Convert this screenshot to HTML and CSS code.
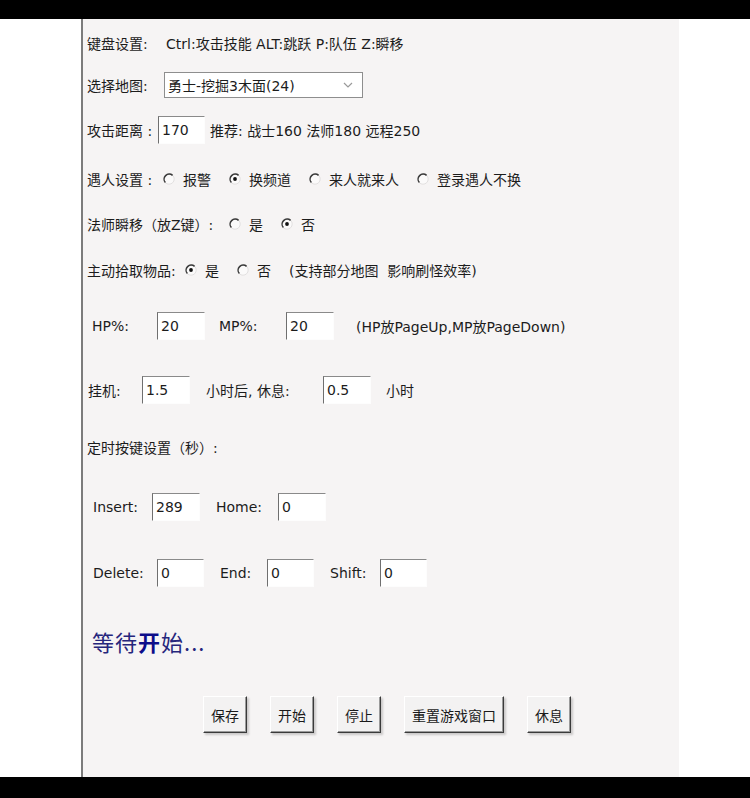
FILE: index.html
```html
<!DOCTYPE html>
<html lang="zh">
<head>
<meta charset="utf-8">
<title>设置</title>
<link rel="stylesheet" href="styles.css">
</head>
<body>
<div class="topbar"></div>
<div class="main">
  <div class="gutter"></div>
  <div class="divider"></div>
  <div class="panel">
    <div class="row row-keys">
      <span class="lbl w79">键盘设置:</span>
      <span>Ctrl:攻击技能 ALT:跳跃 P:队伍 Z:瞬移</span>
    </div>
    <div class="row row-map">
      <span class="lbl w77">选择地图:</span>
      <div class="select">
        <span>勇士-挖掘3木面(24)</span>
        <svg class="chev" viewBox="0 0 10 6" width="10" height="6"><polyline points="1,1 5,5 9,1" fill="none" stroke="#9a9a9a" stroke-width="1.2"/></svg>
      </div>
    </div>
    <div class="row row-dist">
      <span class="lbl w71">攻击距离 :</span>
      <span class="field w47">170</span>
      <span class="ml4">推荐: 战士160 法师180 远程250</span>
    </div>
    <div class="row row-meet">
      <span class="lbl w76">遇人设置 :</span>
      <span class="opt"><svg class="radio" viewBox="0 0 12 12"><circle cx="6" cy="6" r="5.2" fill="#fbfafa" stroke="#e2e0e0" stroke-width="1"/><path d="M2.4 9.6A5.1 5.1 0 0 1 9.6 2.4" fill="none" stroke="#3a3a3a" stroke-width="1.5"/></svg>报警</span>
      <span class="opt"><svg class="radio" viewBox="0 0 12 12"><circle cx="6" cy="6" r="5.2" fill="#fbfafa" stroke="#e2e0e0" stroke-width="1"/><path d="M2.4 9.6A5.1 5.1 0 0 1 9.6 2.4" fill="none" stroke="#3a3a3a" stroke-width="1.5"/><circle cx="6" cy="6" r="1.9" fill="#111"/></svg>换频道</span>
      <span class="opt"><svg class="radio" viewBox="0 0 12 12"><circle cx="6" cy="6" r="5.2" fill="#fbfafa" stroke="#e2e0e0" stroke-width="1"/><path d="M2.4 9.6A5.1 5.1 0 0 1 9.6 2.4" fill="none" stroke="#3a3a3a" stroke-width="1.5"/></svg>来人就来人</span>
      <span class="opt"><svg class="radio" viewBox="0 0 12 12"><circle cx="6" cy="6" r="5.2" fill="#fbfafa" stroke="#e2e0e0" stroke-width="1"/><path d="M2.4 9.6A5.1 5.1 0 0 1 9.6 2.4" fill="none" stroke="#3a3a3a" stroke-width="1.5"/></svg>登录遇人不换</span>
    </div>
    <div class="row row-mage">
      <span class="lbl w142">法师瞬移（放Z键）:</span>
      <span class="opt"><svg class="radio" viewBox="0 0 12 12"><circle cx="6" cy="6" r="5.2" fill="#fbfafa" stroke="#e2e0e0" stroke-width="1"/><path d="M2.4 9.6A5.1 5.1 0 0 1 9.6 2.4" fill="none" stroke="#3a3a3a" stroke-width="1.5"/></svg>是</span>
      <span class="opt"><svg class="radio" viewBox="0 0 12 12"><circle cx="6" cy="6" r="5.2" fill="#fbfafa" stroke="#e2e0e0" stroke-width="1"/><path d="M2.4 9.6A5.1 5.1 0 0 1 9.6 2.4" fill="none" stroke="#3a3a3a" stroke-width="1.5"/><circle cx="6" cy="6" r="1.9" fill="#111"/></svg>否</span>
    </div>
    <div class="row row-pick">
      <span class="lbl w98">主动拾取物品:</span>
      <span class="opt"><svg class="radio" viewBox="0 0 12 12"><circle cx="6" cy="6" r="5.2" fill="#fbfafa" stroke="#e2e0e0" stroke-width="1"/><path d="M2.4 9.6A5.1 5.1 0 0 1 9.6 2.4" fill="none" stroke="#3a3a3a" stroke-width="1.5"/><circle cx="6" cy="6" r="1.9" fill="#111"/></svg>是</span>
      <span class="opt"><svg class="radio" viewBox="0 0 12 12"><circle cx="6" cy="6" r="5.2" fill="#fbfafa" stroke="#e2e0e0" stroke-width="1"/><path d="M2.4 9.6A5.1 5.1 0 0 1 9.6 2.4" fill="none" stroke="#3a3a3a" stroke-width="1.5"/></svg>否</span>
      <span class="note">(支持部分地图&nbsp; 影响刷怪效率)</span>
    </div>
    <div class="row row-hp">
      <span class="lbl w65">HP%:</span>
      <span class="field">20</span>
      <span class="lbl w67 ml14">MP%:</span>
      <span class="field">20</span>
      <span class="ml22">(HP放PageUp,MP放PageDown)</span>
    </div>
    <div class="row row-idle">
      <span class="lbl w54">挂机:</span>
      <span class="field">1.5</span>
      <span class="lbl w117 ml16">小时后, 休息:</span>
      <span class="field">0.5</span>
      <span class="ml15">小时</span>
    </div>
    <div class="row row-timer">
      <span>定时按键设置（秒）:</span>
    </div>
    <div class="row row-ins">
      <span class="lbl w59">Insert:</span>
      <span class="field">289</span>
      <span class="lbl w62 ml16">Home:</span>
      <span class="field">0</span>
    </div>
    <div class="row row-del">
      <span class="lbl w64">Delete:</span>
      <span class="field w47">0</span>
      <span class="lbl w47 ml16">End:</span>
      <span class="field w47">0</span>
      <span class="lbl w50 ml16">Shift:</span>
      <span class="field w47">0</span>
    </div>
    <div class="row row-status">
      <span class="status">等待<b>开</b>始...</span>
    </div>
    <div class="buttons">
      <button class="btn">保存</button>
      <button class="btn">开始</button>
      <button class="btn">停止</button>
      <button class="btn">重置游戏窗口</button>
      <button class="btn">休息</button>
    </div>
  </div>
  <div class="rest"></div>
</div>
<div class="bottombar"></div>
</body>
</html>
```
FILE: styles.css
```css
* { box-sizing: border-box; }
html, body { margin: 0; padding: 0; background: #fff; }
body {
  width: 750px;
  height: 798px;
  overflow: hidden;
  font-family: "DejaVu Sans", "Noto Sans CJK SC", sans-serif;
  font-size: 14px;
  color: #1c1c1c;
}
.topbar { height: 19px; background: #000; }
.bottombar { height: 21px; background: #000; }
.main { display: flex; height: 758px; }
.gutter { width: 81px; background: #fff; }
.divider { width: 2px; background: #7c7c7c; }
.panel {
  width: 596px;
  background: #f6f4f4;
  padding: 9px 0 0 4px;
  display: flex;
  flex-direction: column;
}
.rest { flex: 1; background: #fff; }

.row { display: flex; align-items: center; height: 30px; white-space: nowrap; }
.row-map { margin-top: 12px; }
.row-dist { margin-top: 15px; }
.row-meet { margin-top: 19px; }
.row-mage { margin-top: 15px; }
.row-pick { margin-top: 16px; }
.row-hp { margin-top: 26px; padding-left: 5px; }
.row-idle { margin-top: 34px; padding-left: 1px; }
.row-timer { margin-top: 27px; }
.row-ins { margin-top: 30px; padding-left: 6px; }
.row-del { margin-top: 36px; padding-left: 6px; }
.row-status { margin-top: 38px; padding-left: 5px; }

.lbl { display: inline-block; flex: none; }
.w47 { width: 47px; }
.w50 { width: 50px; }
.w54 { width: 54px; }
.w59 { width: 59px; }
.w62 { width: 62px; }
.w64 { width: 64px; }
.w65 { width: 65px; }
.w67 { width: 67px; }
.w71 { width: 71px; }
.w76 { width: 76px; }
.w77 { width: 77px; }
.w79 { width: 79px; }
.w98 { width: 98px; }
.w117 { width: 117px; }
.w142 { width: 142px; }
.ml4 { margin-left: 5px; }
.ml14 { margin-left: 14px; }
.ml15 { margin-left: 15px; }
.ml16 { margin-left: 16px; }
.ml22 { margin-left: 22px; }

.select {
  width: 199px;
  height: 26px;
  background: #fff;
  border: 1px solid #8e8e8e;
  display: flex;
  align-items: center;
  justify-content: space-between;
  padding: 0 9px 0 3px;
}
.chev { display: block; }

.field {
  flex: none;
  width: 48px;
  height: 28px;
  background: #fff;
  border-top: 1px solid #8a8a8a;
  border-left: 1px solid #6f6f6f;
  border-right: 1px solid #fdfdfd;
  border-bottom: 1px solid #fdfdfd;
  display: flex;
  align-items: center;
  padding-left: 3px;
}
.field.w47 { width: 47px; }

.opt { display: inline-flex; align-items: center; margin-right: 18px; }
.radio { width: 12px; height: 12px; margin-right: 8px; flex: none; }
.note { margin-left: 0; }

.status {
  font-family: "Noto Sans CJK SC", sans-serif;
  font-size: 22px;
  font-weight: 400;
  color: #26267c;
  letter-spacing: 1px;
}
.status b { font-weight: 700; color: #0d0d8a; }

.buttons {
  display: flex;
  gap: 23px;
  margin-top: 40px;
  padding-left: 116px;
}
.btn {
  height: 37px;
  padding: 0 7px;
  font-family: "Noto Sans CJK SC", sans-serif;
  font-size: 14px;
  color: #1a1a1a;
  background: #f3f2f2;
  border: 1px solid;
  border-color: #ffffff #3a3a3a #3a3a3a #ffffff;
  box-shadow: inset -1px -1px 0 #9a9a9a, 2px 2px 2px rgba(0,0,0,0.18);
  border-radius: 0;
}
```
